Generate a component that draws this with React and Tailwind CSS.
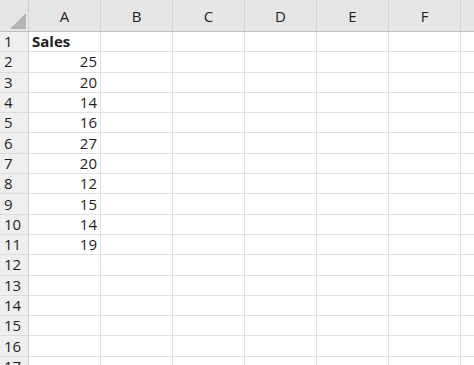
const cols = ['A', 'B', 'C', 'D', 'E', 'F', 'G']
const sales = [25, 20, 14, 16, 27, 20, 12, 15, 14, 19]
const rows = Array.from({ length: 17 }, (_, i) => i + 1)

function cellText(r, c) {
  if (c !== 0) return ''
  if (r === 1) return 'Sales'
  return sales[r - 2] ?? ''
}

export default function App() {
  return (
    <div className="w-[474px] h-[365px] overflow-hidden bg-white text-[#1e1e1e] text-[15px]" style={{ fontFamily: '"Open Sans", "Noto Sans", sans-serif' }}>
      <div className="flex h-[32px] bg-[#e6e6e6] border-b border-[#bcbcbc]">
        <div className="w-[29px] shrink-0 border-r border-[#cfcfcf] relative">
          <div className="absolute right-[2px] bottom-[2px] w-[16px] h-[16px] bg-[#b4b4b4] [clip-path:polygon(100%_0,100%_100%,0_100%)]" />
        </div>
        {cols.map(c => (
          <div key={c} className="w-[72px] shrink-0 border-r border-[#d2d2d2] flex items-center justify-center pt-[2px]">
            {c}
          </div>
        ))}
      </div>
      {rows.map(r => (
        <div key={r} className="flex h-[20.3px]">
          <div className="w-[29px] shrink-0 bg-[#efefef] border-r border-[#cfcfcf] border-b border-b-[#dcdcdc] flex items-center pl-[4px] leading-none">
            {r}
          </div>
          {cols.map((c, i) => (
            <div
              key={c}
              className={`w-[72px] shrink-0 border-r border-b border-[#e0e0e0] flex items-center leading-none overflow-hidden ${r === 1 ? 'justify-start pl-[3px] font-bold' : 'justify-end pr-[3px]'}`}
            >
              {cellText(r, i)}
            </div>
          ))}
        </div>
      ))}
    </div>
  )
}
